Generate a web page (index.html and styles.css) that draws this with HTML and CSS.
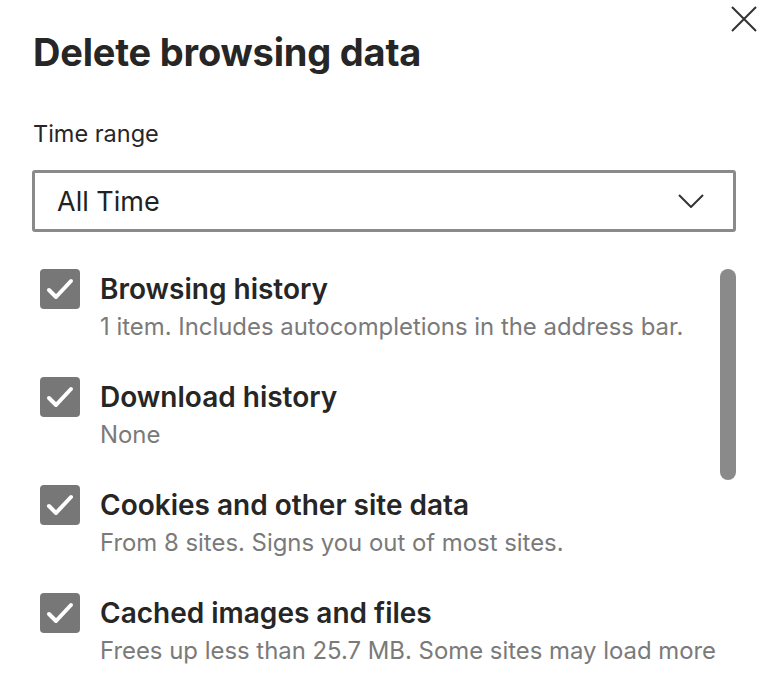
FILE: index.html
```html
<!DOCTYPE html>
<html lang="en">
<head>
<meta charset="utf-8">
<title>Delete browsing data</title>
<link rel="stylesheet" href="styles.css">
</head>
<body>
<div class="dialog">
  <button class="close" aria-label="Close">
    <svg width="26" height="26" viewBox="0 0 26 26"><path d="M1 1 L25 25 M25 1 L1 25" stroke="#333" stroke-width="2" fill="none"/></svg>
  </button>
  <h1 class="title">Delete browsing data</h1>
  <div class="field-label">Time range</div>
  <div class="select">
    <span class="select-value">All Time</span>
    <svg class="chevron" width="26" height="14" viewBox="0 0 26 14"><path d="M1 1 L13 13 L25 1" stroke="#333" stroke-width="2" fill="none"/></svg>
  </div>
  <div class="list-wrap">
    <div class="list">
      <div class="item">
        <span class="check"><svg width="40" height="40" viewBox="0 0 40 40"><path d="M9 21 L16 28 L31 12" stroke="#fff" stroke-width="4" fill="none" stroke-linecap="round" stroke-linejoin="round"/></svg></span>
        <div class="item-text">
          <div class="item-title">Browsing history</div>
          <div class="item-desc">1 item. Includes autocompletions in the address bar.</div>
        </div>
      </div>
      <div class="item">
        <span class="check"><svg width="40" height="40" viewBox="0 0 40 40"><path d="M9 21 L16 28 L31 12" stroke="#fff" stroke-width="4" fill="none" stroke-linecap="round" stroke-linejoin="round"/></svg></span>
        <div class="item-text">
          <div class="item-title">Download history</div>
          <div class="item-desc">None</div>
        </div>
      </div>
      <div class="item">
        <span class="check"><svg width="40" height="40" viewBox="0 0 40 40"><path d="M9 21 L16 28 L31 12" stroke="#fff" stroke-width="4" fill="none" stroke-linecap="round" stroke-linejoin="round"/></svg></span>
        <div class="item-text">
          <div class="item-title">Cookies and other site data</div>
          <div class="item-desc">From 8 sites. Signs you out of most sites.</div>
        </div>
      </div>
      <div class="item">
        <span class="check"><svg width="40" height="40" viewBox="0 0 40 40"><path d="M9 21 L16 28 L31 12" stroke="#fff" stroke-width="4" fill="none" stroke-linecap="round" stroke-linejoin="round"/></svg></span>
        <div class="item-text">
          <div class="item-title">Cached images and files</div>
          <div class="item-desc">Frees up less than 25.7 MB. Some sites may load more</div>
        </div>
      </div>
    </div>
    <div class="scrollbar"><div class="thumb"></div></div>
  </div>
</div>
</body>
</html>
```
FILE: styles.css
```css
html, body {
  margin: 0;
  padding: 0;
  background: #fff;
}
body {
  font-family: Inter, "Noto Sans", sans-serif;
  color: #262626;
  height: 678px;
  overflow: hidden;
}
.dialog {
  position: relative;
  padding: 29px 34px 0 32px;
}
.close {
  position: absolute;
  top: 6px;
  right: 13px;
  padding: 0;
  border: 0;
  background: none;
  width: 26px;
  height: 26px;
}
.close svg { display: block; }
.title {
  margin: 0 0 0 1px;
  font-size: 38px;
  font-weight: 700;
  line-height: 46px;
  letter-spacing: -0.2px;
  color: #262626;
}
.field-label {
  margin: 45px 0 0 1px;
  font-size: 23.5px;
  line-height: 28px;
  color: #262626;
}
.select {
  margin-top: 22px;
  height: 56px;
  border: 3px solid #8a8a8a;
  border-radius: 3px;
  display: flex;
  align-items: center;
  justify-content: space-between;
  padding: 0 29px 0 22px;
}
.select-value {
  font-size: 27px;
  color: #222;
}
.chevron { display: block; }
.list-wrap {
  margin-top: 37px;
  display: flex;
}
.list {
  flex: 1;
  display: flex;
  flex-direction: column;
  gap: 32px;
}
.item {
  display: flex;
  gap: 20px;
  padding-left: 8px;
}
.check {
  flex: 0 0 40px;
  width: 40px;
  height: 40px;
  border-radius: 4px;
  background: #777;
}
.check svg { display: block; }
.item-text {
  padding-top: 1px;
}
.item-title {
  font-size: 28px;
  font-weight: 600;
  line-height: 38px;
  color: #262626;
}
.item-desc {
  font-size: 23.9px;
  line-height: 37px;
  color: #7a7a7a;
  white-space: nowrap;
}
.scrollbar {
  flex: 0 0 16px;
  width: 16px;
}
.thumb {
  height: 211px;
  border-radius: 8px;
  background: #8a8a8a;
}
```
